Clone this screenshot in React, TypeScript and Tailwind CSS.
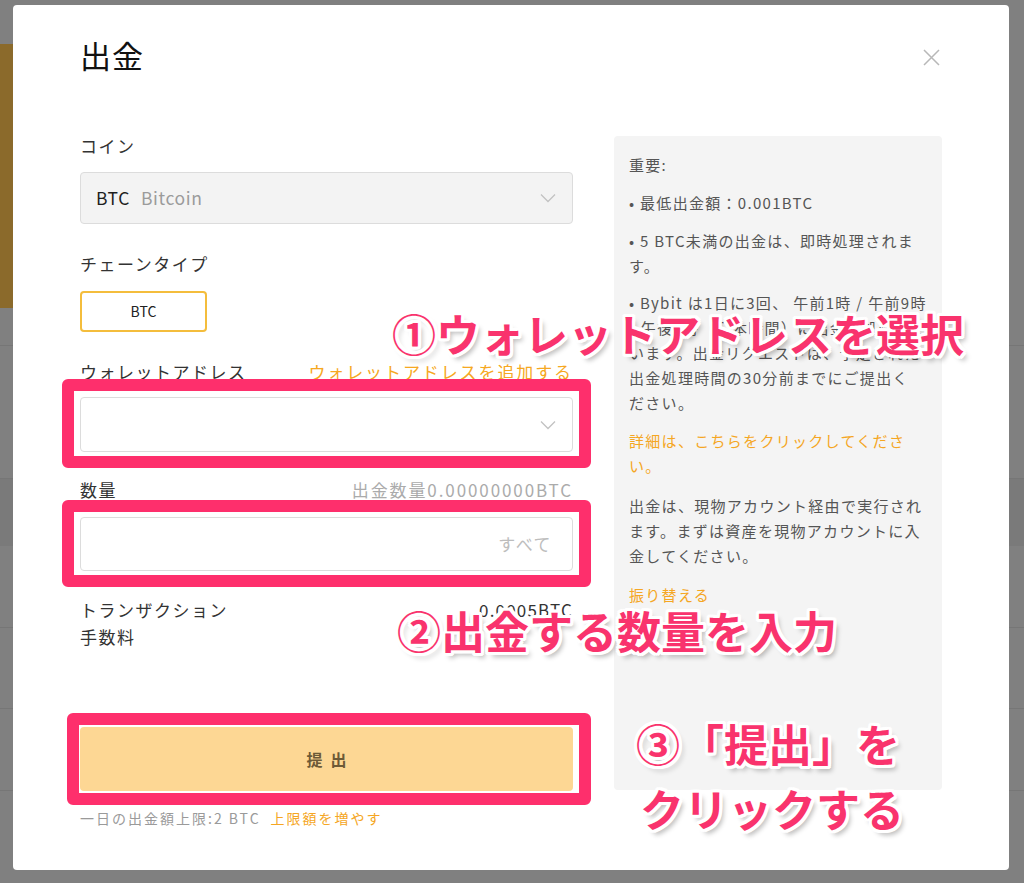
import React from 'react';

function Chevron() {
  return (
    <svg width="16" height="10" viewBox="0 0 16 10" fill="none" className="shrink-0">
      <path d="M1 1.5 L8 8.5 L15 1.5" stroke="#c2c2c2" strokeWidth="1.3" />
    </svg>
  );
}

function CloseIcon() {
  return (
    <svg width="17" height="17" viewBox="0 0 17 17" fill="none">
      <path d="M1 1 L16 16 M16 1 L1 16" stroke="#b8b8b8" strokeWidth="1.5" />
    </svg>
  );
}

const annotationText =
  "font-bold leading-none text-[#f9336d] whitespace-nowrap [text-shadow:3px_0_0_#fff,-3px_0_0_#fff,0_3px_0_#fff,0_-3px_0_#fff,2px_2px_0_#fff,-2px_-2px_0_#fff,2px_-2px_0_#fff,-2px_2px_0_#fff,3px_2px_0_#fff,-3px_2px_0_#fff,3px_-2px_0_#fff,-3px_-2px_0_#fff,2px_3px_0_#fff,-2px_3px_0_#fff,2px_-3px_0_#fff,-2px_-3px_0_#fff,4px_5px_5px_rgba(0,0,0,0.28)]";

function InfoPanel() {
  return (
    <div className="mt-[2px] h-[654px] w-[328px] shrink-0 rounded-[4px] bg-[#f4f4f4] px-[15px] pt-[16px] text-[15px] leading-[25px] tracking-[1.3px] text-[#555] whitespace-nowrap">
      <p>重要:</p>
      <p className="mt-[13px]">• 最低出金額：0.001BTC</p>
      <p className="mt-[13px]">
        • 5 BTC未満の出金は、即時処理されま
        <br />
        す。
      </p>
      <p className="mt-[12px]">
        • Bybit は1日に3回、 午前1時 / 午前9時
        <br />
        / 午後5時（日本時間）に出金を処理して
        <br />
        います。出金リクエストは、予定された
        <br />
        出金処理時間の30分前までにご提出く
        <br />
        ださい。
      </p>
      <p className="mt-[13px] text-[#f5a623]">
        詳細は、こちらをクリックしてくださ
        <br />
        い。
      </p>
      <p className="mt-[15px]">
        出金は、現物アカウント経由で実行され
        <br />
        ます。まずは資産を現物アカウントに入
        <br />
        金してください。
      </p>
      <p className="mt-[14px] text-[#f5a623]">振り替える</p>
    </div>
  );
}

function WithdrawForm() {
  return (
    <div className="flex w-[493px] shrink-0 flex-col text-[17px] tracking-[1.5px] text-[#333]">
      <div className="leading-[24px]">コイン</div>
      <div className="mt-[14px] flex h-[52px] items-center justify-between rounded-[4px] border border-[#dcdcdc] bg-[#f3f3f3] pl-[15px] pr-[16px]">
        <div className="flex items-center text-[17.5px] tracking-[0.6px]">
          <span className="text-[#1e1e1e]">BTC</span>
          <span className="ml-[11px] text-[#9b9b9b]">Bitcoin</span>
        </div>
        <Chevron />
      </div>

      <div className="mt-[28px] leading-[24px]">チェーンタイプ</div>
      <div className="mt-[15px] flex h-[41px] w-[127px] items-center justify-center rounded-[4px] border-2 border-[#f4bd3c] bg-white text-[14px] tracking-normal text-[#222]">
        BTC
      </div>

      <div className="mt-[28px] flex items-center justify-between leading-[24px]">
        <span>ウォレットアドレス</span>
        <span className="tracking-[1.9px] text-[#f6a821]">ウォレットアドレスを追加する</span>
      </div>
      <div className="mt-[13px] flex h-[55px] items-center justify-end rounded-[4px] border border-[#dcdcdc] bg-white pr-[16px]">
        <Chevron />
      </div>

      <div className="mt-[26px] flex items-center justify-between leading-[24px]">
        <span>数量</span>
        <span className="tracking-[1.9px] text-[#ababab]">出金数量0.00000000BTC</span>
      </div>
      <div className="mt-[15px] flex h-[54px] items-center justify-end rounded-[4px] border border-[#dcdcdc] bg-white pr-[20px]">
        <span className="text-[#bdbdbd]">すべて</span>
      </div>

      <div className="mt-[25px] flex justify-between leading-[27px]">
        <span>
          トランザクション
          <br />
          手数料
        </span>
        <span className="tracking-[1.2px]">0.0005BTC</span>
      </div>

      <button className="mt-[77px] flex h-[64px] items-center justify-center rounded-[4px] bg-[#fdd794] pl-[8px] text-[16px] font-bold tracking-[8px] text-[#6d5a37]">
        提出
      </button>
      <div className="mt-[17px] text-[14px] leading-[20px] tracking-[2px] text-[#9a9a9a]">
        一日の出金額上限:2 BTC
        <span className="ml-[10px] text-[#f5a623]">上限額を増やす</span>
      </div>
    </div>
  );
}

export default function App() {
  return (
    <div className="relative h-[883px] w-[1024px] overflow-hidden bg-[#808080] font-['Noto_Sans_CJK_JP','Noto_Sans',sans-serif]">
      {/* dimmed page behind the dialog */}
      <div className="absolute inset-0 flex flex-col">
        <div className="h-[44px]" />
        <div className="h-[264px] w-[420px] bg-[#8b6a2b]" />
        <div className="h-[38px] border-b border-[#767676]" />
        <div className="h-[133px] border-b border-[#767676]" />
        <div className="h-[67px] bg-[#7a7a7a]" />
        <div className="h-[82px] border-b border-[#767676]" />
        <div className="h-[81px] border-b border-[#767676]" />
        <div className="h-[82px] border-b border-[#767676]" />
      </div>

      <div className="relative ml-[13px] mt-[5px] flex h-[865px] w-[996px] flex-col rounded-[4px] bg-white px-[67px] pt-[30px]">
        <div className="flex items-center justify-between">
          <h1 className="text-[31px] leading-[40px] tracking-[1px] text-[#111]">出金</h1>
          <div className="mr-[2px] mt-[4px]">
            <CloseIcon />
          </div>
        </div>
        <div className="mt-[59px] flex items-start gap-[41px]">
          <WithdrawForm />
          <InfoPanel />
        </div>
      </div>

      {/* tutorial annotations drawn over the screenshot */}
      <div className="pointer-events-none absolute left-[62px] top-[379px] h-[89px] w-[529px] rounded-[6px] border-[12px] border-[#fe2f6c]" />
      <div className="pointer-events-none absolute left-[62px] top-[500px] h-[87px] w-[529px] rounded-[6px] border-[12px] border-[#fe2f6c]" />
      <div className="pointer-events-none absolute left-[67px] top-[713px] h-[92px] w-[524px] rounded-[6px] border-[12px] border-[#fe2f6c]" />

      <div className={`absolute left-[392px] top-[311px] text-[44px] ${annotationText}`}>①ウォレットアドレスを選択</div>
      <div className={`absolute left-[397px] top-[608px] text-[44px] ${annotationText}`}>②出金する数量を入力</div>
      <div className={`absolute left-[636px] top-[721px] text-[44px] ${annotationText}`}>③「提出」を</div>
      <div className={`absolute left-[640px] top-[786px] text-[44px] ${annotationText}`}>クリックする</div>
    </div>
  );
}
